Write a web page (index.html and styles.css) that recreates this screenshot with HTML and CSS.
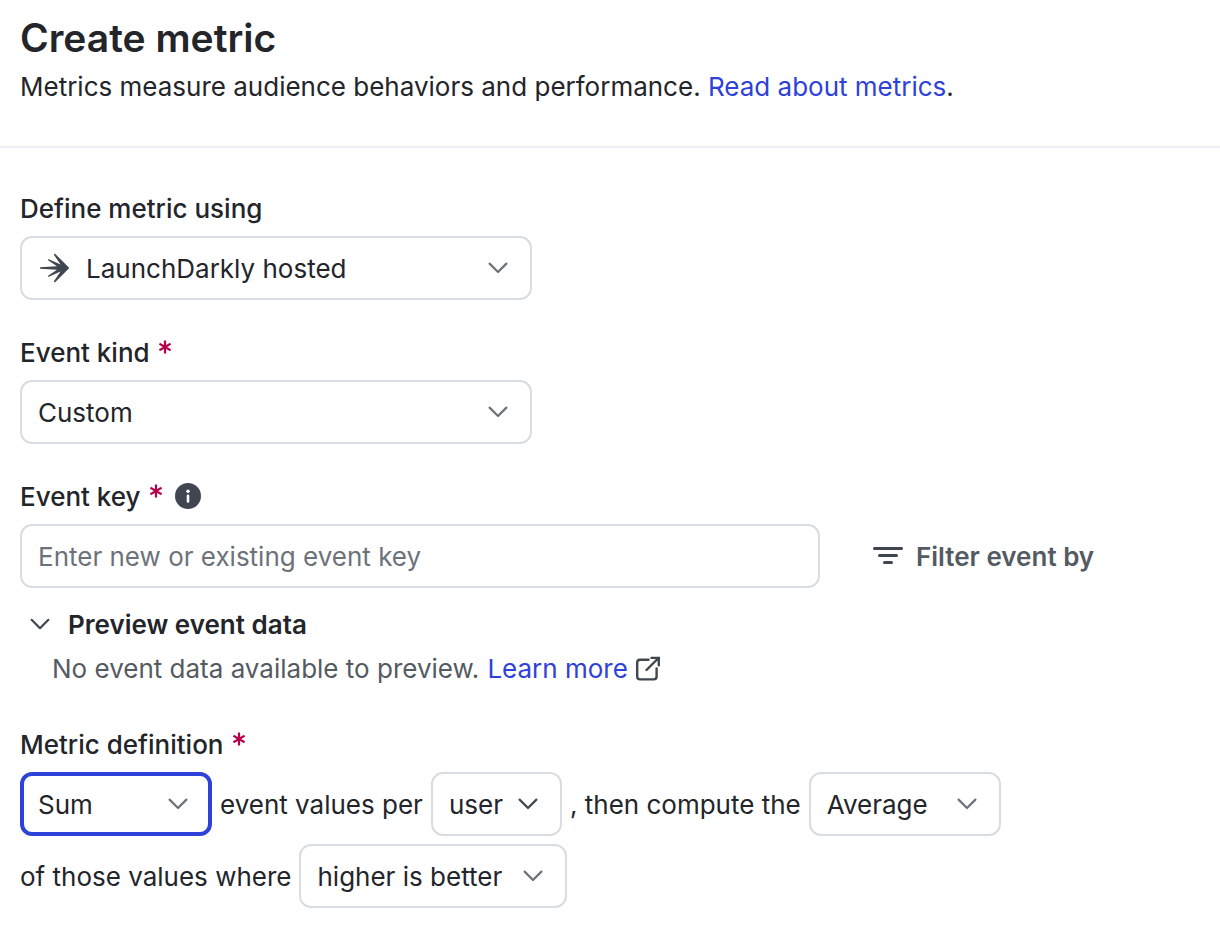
FILE: index.html
```html
<!DOCTYPE html>
<html lang="en">
<head>
    <meta charset="UTF-8">
    <meta name="viewport" content="width=device-width, initial-scale=1.0">
    <title>Create metric</title>
    <link rel="stylesheet" href="styles.css">
</head>
<body>
    <header class="page-header">
        <h1>Create metric</h1>
        <p>Metrics measure audience behaviors and performance. <a href="#">Read about metrics</a>.</p>
    </header>

    <form class="metric-form">
        <div class="field">
            <div class="field-label">
                <label for="source">Define metric using</label>
            </div>
            <div class="select select-wide select-source">
                <svg class="source-icon" width="30" height="30" viewBox="0 0 30 30" aria-hidden="true">
                    <path d="M0.3 14.3 L17 13.3 L8.1 7.2 Q7.4 6 8.8 6.2 L20.6 11.6 L13.9 1.8 Q14 0.4 15.3 1.1 L28.6 14.2 Q29.4 15 28.6 15.8 L15.3 28.9 Q14 29.6 13.9 28.2 L20.6 18.4 L8.8 23.8 Q7.4 24 8.1 22.8 L17 16.7 L0.3 15.7 Q-0.5 15 0.3 14.3 Z"/>
                </svg>
                <select id="source">
                    <option>LaunchDarkly hosted</option>
                </select>
                <svg class="chevron" width="20" height="20" viewBox="0 0 20 20" aria-hidden="true"><path d="M1.6 5.6 L10 14 L18.4 5.6"/></svg>
            </div>
        </div>

        <div class="field">
            <div class="field-label">
                <label for="kind">Event kind</label>
                <svg class="required" width="12" height="14" viewBox="0 0 12 14" aria-hidden="true"><path d="M6 0.4 V13.6 M0.4 3.8 L11.6 10.2 M11.6 3.8 L0.4 10.2"/></svg>
            </div>
            <div class="select select-wide">
                <select id="kind" required>
                    <option>Custom</option>
                </select>
                <svg class="chevron" width="20" height="20" viewBox="0 0 20 20" aria-hidden="true"><path d="M1.6 5.6 L10 14 L18.4 5.6"/></svg>
            </div>
        </div>

        <div class="field field-key">
            <div class="field-label">
                <label for="key">Event key</label>
                <svg class="required" width="12" height="14" viewBox="0 0 12 14" aria-hidden="true"><path d="M6 0.4 V13.6 M0.4 3.8 L11.6 10.2 M11.6 3.8 L0.4 10.2"/></svg>
                <button type="button" class="info" aria-label="About event keys">
                    <svg width="26" height="26" viewBox="0 0 26 26" aria-hidden="true">
                        <circle cx="13" cy="13" r="13"/>
                        <circle class="mark" cx="13" cy="8.3" r="1.7"/>
                        <rect class="mark" x="11.7" y="11.4" width="2.6" height="8.4" rx="1.3"/>
                    </svg>
                </button>
            </div>
            <div class="key-row">
                <input id="key" type="text" placeholder="Enter new or existing event key" required>
                <button type="button" class="filter">
                    <svg width="30" height="18" viewBox="0 0 30 18" aria-hidden="true"><path d="M1.5 1.5 H28.5 M6.5 8.5 H23.5 M11.5 15.5 H18.5"/></svg>
                    <span>Filter event by</span>
                </button>
            </div>
        </div>

        <div class="preview">
            <button type="button" class="preview-toggle" aria-expanded="true">
                <svg class="chevron chevron-dark" width="20" height="20" viewBox="0 0 20 20" aria-hidden="true"><path d="M1.6 4.8 L10 13.2 L18.4 4.8"/></svg>
                Preview event data
            </button>
            <p>
                No event data available to preview. <a href="#">Learn more</a>
                <svg class="external" width="24" height="24" viewBox="0 0 24 24" aria-hidden="true"><path d="M12.5 2.8 H4 Q1.2 2.8 1.2 5.6 V19.6 Q1.2 22.4 4 22.4 H17.8 Q20.6 22.4 20.6 19.6 V11.5 M10.5 13 L22.5 1 M15.5 0.9 H22.8 V8.2"/></svg>
            </p>
        </div>

        <fieldset class="field definition">
            <legend class="field-label">
                Metric definition
                <svg class="required" width="12" height="14" viewBox="0 0 12 14" aria-hidden="true"><path d="M6 0.4 V13.6 M0.4 3.8 L11.6 10.2 M11.6 3.8 L0.4 10.2"/></svg>
            </legend>
            <div class="sentence">
                <div class="select select-medium is-active">
                    <select aria-label="Aggregation">
                        <option>Sum</option>
                    </select>
                    <svg class="chevron" width="20" height="20" viewBox="0 0 20 20" aria-hidden="true"><path d="M1.6 5.6 L10 14 L18.4 5.6"/></svg>
                </div>
                <span>event values per</span>
                <button type="button" class="unit" aria-haspopup="listbox">
                    <span>user</span>
                    <svg class="chevron chevron-dark" width="20" height="20" viewBox="0 0 20 20" aria-hidden="true"><path d="M1.6 5.6 L10 14 L18.4 5.6"/></svg>
                </button>
                <span>, then compute the</span>
                <div class="select select-medium">
                    <select aria-label="Analysis method">
                        <option>Average</option>
                    </select>
                    <svg class="chevron" width="20" height="20" viewBox="0 0 20 20" aria-hidden="true"><path d="M1.6 5.6 L10 14 L18.4 5.6"/></svg>
                </div>
            </div>
            <div class="sentence">
                <span>of those values where</span>
                <div class="select select-direction">
                    <select aria-label="Success criteria">
                        <option>higher is better</option>
                    </select>
                    <svg class="chevron" width="20" height="20" viewBox="0 0 20 20" aria-hidden="true"><path d="M1.6 5.6 L10 14 L18.4 5.6"/></svg>
                </div>
            </div>
        </fieldset>
    </form>
</body>
</html>
```

FILE: styles.css
```css
* {
    margin: 0;
    padding: 0;
    box-sizing: border-box;
}

body {
    background: #fff;
    color: #23252a;
    font-family: 'Inter', sans-serif;
    font-size: 26px;
    line-height: 38px;
}

a {
    color: #2e41d8;
    text-decoration: none;
}

button,
input,
select {
    font: inherit;
    color: inherit;
    background: none;
    border: none;
}

button {
    cursor: pointer;
}

.page-header {
    padding: 14px 20px 40px;
    border-bottom: 2px solid #ebeff4;
}

h1 {
    font-size: 39px;
    font-weight: 600;
    line-height: 48px;
    margin-bottom: 6px;
}

.metric-form {
    padding: 42px 20px 28px;
}

.field {
    margin-bottom: 34px;
}

.field-label {
    display: flex;
    align-items: center;
    gap: 9px;
    margin-bottom: 8px;
    font-weight: 500;
}

.required {
    align-self: flex-start;
    margin-top: 6px;
    fill: none;
    stroke: #b8004a;
    stroke-width: 2.2;
}

.info {
    display: flex;
    margin: 0 0 2px 4px;
    fill: #3f464f;
}

.info .mark {
    fill: #fff;
}

/* Selects */
.select {
    display: grid;
    align-items: center;
}

.select > * {
    grid-area: 1 / 1;
}

.select select {
    appearance: none;
    width: 100%;
    height: 64px;
    padding: 2px 48px 0 16px;
    border: 2px solid #d8dde3;
    border-radius: 12px;
    outline: none;
}

.select .chevron {
    justify-self: end;
    margin-right: 24px;
    pointer-events: none;
}

.select-wide {
    max-width: 512px;
}

.select-medium {
    width: 192px;
}

.select-direction {
    width: 268px;
}

.select-source select {
    padding-left: 64px;
}

.source-icon {
    margin-left: 20px;
    fill: #3f464f;
    pointer-events: none;
}

.select.is-active select {
    padding-left: 14px;
    border: 4px solid #2e41d8;
}

.chevron {
    fill: none;
    stroke: #6c727a;
    stroke-width: 2.2;
    stroke-linecap: round;
    stroke-linejoin: round;
}

.chevron-dark {
    stroke: #3f464f;
}

/* Event key */
.field-key {
    margin-bottom: 18px;
}

.key-row {
    display: flex;
    align-items: center;
    gap: 53px;
}

.key-row input {
    flex: 0 1 800px;
    min-width: 0;
    height: 64px;
    padding: 0 16px;
    border: 2px solid #d8dde3;
    border-radius: 12px;
}

.key-row input::placeholder {
    color: #6c727a;
    opacity: 1;
}

.filter {
    display: flex;
    align-items: center;
    gap: 13px;
    color: #545a62;
    font-weight: 600;
    white-space: nowrap;
}

.filter span,
.sentence span {
    padding-top: 2px;
}

.filter svg {
    fill: none;
    stroke: #3f464f;
    stroke-width: 3;
    stroke-linecap: round;
}

/* Preview */
.preview {
    margin-bottom: 38px;
    padding-left: 10px;
}

.preview-toggle {
    display: flex;
    align-items: center;
    gap: 18px;
    margin-bottom: 6px;
    font-weight: 600;
}

.preview p {
    display: flex;
    align-items: center;
    gap: 8px;
    padding-left: 22px;
    color: #545a62;
}

.external {
    overflow: visible;
    fill: none;
    stroke: #3f464f;
    stroke-width: 2.4;
    stroke-linecap: round;
}

/* Metric definition */
.definition {
    margin-bottom: 0;
    border: none;
}

.sentence {
    display: flex;
    flex-wrap: wrap;
    align-items: center;
    gap: 8px;
}

.sentence + .sentence {
    margin-top: 8px;
}

.unit {
    display: flex;
    align-items: center;
    gap: 15px;
    height: 64px;
    padding: 0 22px 0 16px;
    border: 2px solid #d8dde3;
    border-radius: 12px;
}
```
